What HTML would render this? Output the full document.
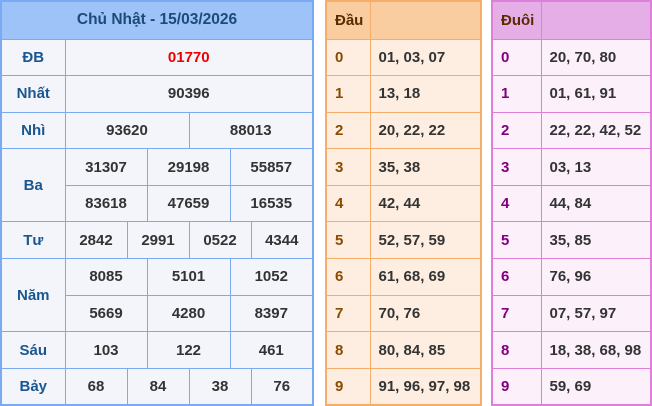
<!DOCTYPE html>
<html><head><meta charset="utf-8"><style>
*{margin:0;padding:0;box-sizing:border-box}
body{width:652px;height:406px;background:#fff;font-family:"Liberation Sans",Arial,sans-serif;font-weight:bold;font-size:15px;position:relative;overflow:hidden}
table{border-collapse:collapse;position:absolute;top:0;table-layout:fixed}
td{text-align:center;height:36.6px;color:#333;padding:0}
#L{left:0;width:314px;border:2px solid #7aaaf2;background:#f3f5fa}
#L td{border:1px solid #7aaaf2}
#L .h{background:#9dc3f9;color:#1e4a78;height:38px;font-size:15.5px}
#L .l{color:#1a5690}
.red{color:#e00}
#O{left:325px;width:157px;border:2px solid #f5ad6a;background:#fdeee1}
#O td{border:1px solid #f5ad6a;text-align:left;padding-left:8px}
#O .h{background:#f9cd9f;height:38px;color:#5a2a00}
#O .d{color:#8a4a00}
#P{left:491px;width:161px;border:2px solid #e07fd9;background:#fcf0fa}
#P td{border:1px solid #e07fd9;text-align:left;padding-left:8px}
#P .h{background:#e6aee6;height:38px;color:#5a2a00}
#P .d{color:#800080}
</style></head><body>
<table id="L">
<colgroup><col style="width:64px"><col style="width:62px"><col style="width:20px"><col style="width:42px"><col style="width:41px"><col style="width:21px"><col style="width:62px"></colgroup>
<tr><td class="h" colspan="7">Chủ Nhật - 15/03/2026</td></tr>
<tr><td class="l">ĐB</td><td colspan="6" class="red">01770</td></tr>
<tr><td class="l">Nhất</td><td colspan="6">90396</td></tr>
<tr><td class="l">Nhì</td><td colspan="3">93620</td><td colspan="3">88013</td></tr>
<tr><td class="l" rowspan="2">Ba</td><td colspan="2">31307</td><td colspan="2">29198</td><td colspan="2">55857</td></tr>
<tr><td colspan="2">83618</td><td colspan="2">47659</td><td colspan="2">16535</td></tr>
<tr><td class="l">Tư</td><td>2842</td><td colspan="2">2991</td><td colspan="2">0522</td><td>4344</td></tr>
<tr><td class="l" rowspan="2">Năm</td><td colspan="2">8085</td><td colspan="2">5101</td><td colspan="2">1052</td></tr>
<tr><td colspan="2">5669</td><td colspan="2">4280</td><td colspan="2">8397</td></tr>
<tr><td class="l">Sáu</td><td colspan="2">103</td><td colspan="2">122</td><td colspan="2">461</td></tr>
<tr><td class="l">Bảy</td><td>68</td><td colspan="2">84</td><td colspan="2">38</td><td>76</td></tr>
</table>
<table id="O"><colgroup><col style="width:44px"><col></colgroup>
<tr><td class="h">Đầu</td><td class="h"></td></tr>
<tr><td class="d">0</td><td>01, 03, 07</td></tr>
<tr><td class="d">1</td><td>13, 18</td></tr>
<tr><td class="d">2</td><td>20, 22, 22</td></tr>
<tr><td class="d">3</td><td>35, 38</td></tr>
<tr><td class="d">4</td><td>42, 44</td></tr>
<tr><td class="d">5</td><td>52, 57, 59</td></tr>
<tr><td class="d">6</td><td>61, 68, 69</td></tr>
<tr><td class="d">7</td><td>70, 76</td></tr>
<tr><td class="d">8</td><td>80, 84, 85</td></tr>
<tr><td class="d">9</td><td>91, 96, 97, 98</td></tr>
</table>
<table id="P"><colgroup><col style="width:49px"><col></colgroup>
<tr><td class="h">Đuôi</td><td class="h"></td></tr>
<tr><td class="d">0</td><td>20, 70, 80</td></tr>
<tr><td class="d">1</td><td>01, 61, 91</td></tr>
<tr><td class="d">2</td><td>22, 22, 42, 52</td></tr>
<tr><td class="d">3</td><td>03, 13</td></tr>
<tr><td class="d">4</td><td>44, 84</td></tr>
<tr><td class="d">5</td><td>35, 85</td></tr>
<tr><td class="d">6</td><td>76, 96</td></tr>
<tr><td class="d">7</td><td>07, 57, 97</td></tr>
<tr><td class="d">8</td><td>18, 38, 68, 98</td></tr>
<tr><td class="d">9</td><td>59, 69</td></tr>
</table>
</body></html>
